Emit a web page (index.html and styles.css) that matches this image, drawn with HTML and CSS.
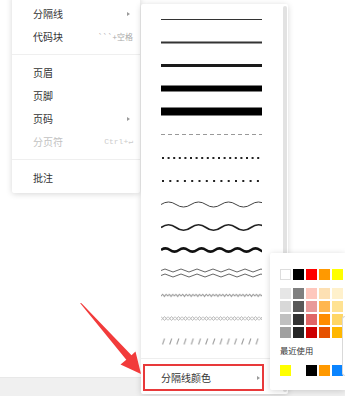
FILE: index.html
```html
<!DOCTYPE html>
<html lang="zh">
<head>
<meta charset="utf-8">
<link rel="stylesheet" href="styles.css">
</head>
<body>
<div class="page">
  <div class="workspace"></div>
  <div class="statusbar"></div>
</div>

<div class="menu main-menu">
  <div class="item"><span>分隔线</span><i class="caret"></i></div>
  <div class="item"><span>代码块</span><span class="kbd">```+空格</span></div>
  <div class="sep"></div>
  <div class="item"><span>页眉</span></div>
  <div class="item"><span>页脚</span></div>
  <div class="item"><span>页码</span><i class="caret"></i></div>
  <div class="item disabled"><span>分页符</span><span class="kbd mono">Ctrl+↵</span></div>
  <div class="sep"></div>
  <div class="item"><span>批注</span></div>
</div>

<div class="menu line-menu">
  <div class="line-list">
    <div class="line-row"><svg viewBox="0 0 101 13"><line x1="0" y1="6.5" x2="101" y2="6.5" stroke="#333" stroke-width="1"/></svg></div>
    <div class="line-row"><svg viewBox="0 0 101 13"><line x1="0" y1="6.5" x2="101" y2="6.5" stroke="#333" stroke-width="2"/></svg></div>
    <div class="line-row"><svg viewBox="0 0 101 13"><line x1="0" y1="6.5" x2="101" y2="6.5" stroke="#1a1a1a" stroke-width="3"/></svg></div>
    <div class="line-row"><svg viewBox="0 0 101 13"><line x1="0" y1="6.5" x2="101" y2="6.5" stroke="#000" stroke-width="6"/></svg></div>
    <div class="line-row"><svg viewBox="0 0 101 13"><line x1="0" y1="6.5" x2="101" y2="6.5" stroke="#000" stroke-width="8"/></svg></div>
    <div class="line-row"><svg viewBox="0 0 101 13"><line x1="0" y1="6.5" x2="101" y2="6.5" stroke="#999" stroke-width="1" stroke-dasharray="4 3"/></svg></div>
    <div class="line-row"><svg viewBox="0 0 101 13"><line x1="1" y1="7" x2="101" y2="7" stroke="#222" stroke-width="2" stroke-dasharray="2 3.6"/></svg></div>
    <div class="line-row"><svg viewBox="0 0 101 13"><line x1="1" y1="7" x2="101" y2="7" stroke="#222" stroke-width="2" stroke-dasharray="2 5.3"/></svg></div>
    <div class="line-row"><svg viewBox="0 0 101 13"><path d="M0,7.5 q7.5,-5 15,0 t15,0 t15,0 t15,0 t15,0 t15,0 t15,0" fill="none" stroke="#444" stroke-width="1"/></svg></div>
    <div class="line-row"><svg viewBox="0 0 101 13"><path d="M0,7.5 q7.5,-5.5 15,0 t15,0 t15,0 t15,0 t15,0 t15,0 t15,0" fill="none" stroke="#222" stroke-width="1.6"/></svg></div>
    <div class="line-row"><svg viewBox="0 0 101 13"><path d="M0,7 q4.5,-3.2 9,0 t9,0 t9,0 t9,0 t9,0 t9,0 t9,0 t9,0 t9,0 t9,0 t9,0 t9,0" fill="none" stroke="#111" stroke-width="2.6"/></svg></div>
    <div class="line-row"><svg viewBox="0 0 101 13"><path d="M0,4.5 q4,-3 8,0 t8,0 t8,0 t8,0 t8,0 t8,0 t8,0 t8,0 t8,0 t8,0 t8,0 t8,0 t8,0" fill="none" stroke="#666" stroke-width="1"/><path d="M0,9.5 q4,-3 8,0 t8,0 t8,0 t8,0 t8,0 t8,0 t8,0 t8,0 t8,0 t8,0 t8,0 t8,0 t8,0" fill="none" stroke="#666" stroke-width="1"/></svg></div>
    <div class="line-row"><svg viewBox="0 0 101 13"><defs><pattern id="zz" width="6.7" height="13" patternUnits="userSpaceOnUse"><path d="M-0.5,7.6 L1.7,5.2 L3.35,7.6 L5,5.2 L7.2,7.6" fill="none" stroke="#9a9a9a" stroke-width="1"/></pattern></defs><rect width="101" height="13" fill="url(#zz)"/></svg></div>
    <div class="line-row"><svg viewBox="0 0 101 13"><defs><pattern id="xx" width="7" height="13" patternUnits="userSpaceOnUse"><path d="M0,4.5 L3.5,8.5 L7,4.5 M0,8.5 L3.5,4.5 L7,8.5" fill="none" stroke="#bbb" stroke-width="1"/></pattern></defs><rect width="101" height="13" fill="url(#xx)"/></svg></div>
    <div class="line-row"><svg viewBox="0 0 101 13"><defs><pattern id="sl" width="7.2" height="13" patternUnits="userSpaceOnUse"><path d="M1.5,9.5 L3.5,3.5" fill="none" stroke="#999" stroke-width="1"/></pattern></defs><rect width="101" height="13" fill="url(#sl)"/></svg></div>
  </div>
  <div class="line-sep"></div>
  <div class="color-item"><span>分隔线颜色</span><i class="caret"></i></div>
  <div class="scrollbar"></div>
</div>

<div class="menu palette">
  <div class="swatches">
    <span class="sw white"></span>
    <span class="sw" style="background:#000000"></span>
    <span class="sw" style="background:#ff0000"></span>
    <span class="sw" style="background:#ff9900"></span>
    <span class="sw" style="background:#ffff00"></span>
  </div>
  <div class="grid">
    <span class="sw" style="background:#e6e6e6"></span>
    <span class="sw" style="background:#7f7f7f"></span>
    <span class="sw" style="background:#fec7bd"></span>
    <span class="sw" style="background:#fde0b3"></span>
    <span class="sw" style="background:#fff1cc"></span>
    <span class="sw" style="background:#d8d8d8"></span>
    <span class="sw" style="background:#595959"></span>
    <span class="sw" style="background:#e89a9a"></span>
    <span class="sw" style="background:#ffb64f"></span>
    <span class="sw" style="background:#ffe292"></span>
    <span class="sw" style="background:#c0c0c0"></span>
    <span class="sw" style="background:#343434"></span>
    <span class="sw" style="background:#e06666"></span>
    <span class="sw" style="background:#ff8c00"></span>
    <span class="sw" style="background:#ffd666"></span>
    <span class="sw" style="background:#a0a0a0"></span>
    <span class="sw" style="background:#262626"></span>
    <span class="sw" style="background:#cc0000"></span>
    <span class="sw" style="background:#e65100"></span>
    <span class="sw" style="background:#ffb700"></span>
  </div>
  <div class="recent-label">最近使用</div>
  <div class="swatches">
    <span class="sw" style="background:#ffff00"></span>
    <span class="sw empty"></span>
    <span class="sw" style="background:#000000"></span>
    <span class="sw" style="background:#ff9900"></span>
    <span class="sw" style="background:#0a84ff"></span>
  </div>
</div>

<div class="edge-box"></div>

<svg class="arrow" viewBox="0 0 345 396" width="345" height="396">
  <path d="M80,303 L81.5,303.2 L131.5,355.2 L135.5,351.5 L141,374 L120.5,364.5 L126.3,359.8 Z" fill="#f23b3b"/>
</svg>
</body>
</html>
```

FILE: styles.css
```css
html, body {
  margin: 0;
  width: 345px;
  height: 396px;
  overflow: hidden;
}

body {
  position: relative;
  background: #fff;
  font-family: "Noto Sans CJK SC", "Noto Sans", sans-serif;
  color: #333;
}

.page {
  display: flex;
  flex-direction: column;
  height: 100%;
}

.workspace {
  flex: 1;
}

.statusbar {
  height: 19px;
  background: #f0f0f0;
  border-top: 1px solid #e8e8e8;
  box-sizing: border-box;
}

.menu {
  position: absolute;
  background: #fff;
  border-radius: 2px;
  box-shadow: 0 1px 6px rgba(0, 0, 0, 0.16);
  box-sizing: border-box;
}

/* main context menu */
.main-menu {
  left: 12px;
  top: -6px;
  width: 128px;
  padding: 8px 0 4px;
}

.item {
  height: 23px;
  display: flex;
  align-items: center;
  justify-content: space-between;
  padding: 0 7px 0 21px;
  font-size: 10px;
  line-height: 1;
  color: #333;
}

.item.disabled {
  color: #c2c2c2;
}

.sep {
  height: 1px;
  background: #efefef;
  margin: 6px 0;
}

.caret {
  width: 0;
  height: 0;
  border-left: 3px solid #9a9a9a;
  border-top: 2.5px solid transparent;
  border-bottom: 2.5px solid transparent;
  margin-right: 3px;
}

.kbd {
  font-size: 8px;
  color: #aaa;
}

.kbd.mono {
  font-family: "Liberation Mono", "DejaVu Sans Mono", monospace;
  color: #ccc;
}

/* line style submenu */
.line-menu {
  left: 141px;
  top: 4px;
  width: 147px;
  height: 390px;
  padding-top: 4px;
  z-index: 2;
}

.line-row {
  height: 23px;
  display: flex;
  align-items: center;
  padding-left: 20px;
}

.line-row svg {
  display: block;
  width: 101px;
  height: 13px;
}

.line-sep {
  height: 1px;
  background: #eee;
  margin-top: 5px;
  margin-right: 6px;
}

.color-item {
  margin: 5px 24px 0 2px;
  height: 27px;
  border: 2px solid #e8393a;
  box-sizing: border-box;
  display: flex;
  align-items: center;
  justify-content: space-between;
  padding: 0 0 0 16px;
  font-size: 10px;
  color: #333;
}

.color-item .caret {
  margin-right: 2px;
}

.scrollbar {
  position: absolute;
  right: 1px;
  top: 2px;
  bottom: 2px;
  width: 4px;
  border-radius: 2px;
  background: #e2e2e2;
}

/* colour palette */
.palette {
  left: 270px;
  top: 253px;
  width: 75px;
  height: 137px;
  padding: 16px 0 0 10px;
  border-radius: 2px 0 0 2px;
  overflow: hidden;
  z-index: 3;
}

.swatches {
  display: flex;
  gap: 2px;
}

.sw {
  display: block;
  flex: none;
  width: 11px;
  height: 11px;
  box-sizing: border-box;
}

.sw.white {
  background: #fff;
  border: 1px solid #ddd;
}

.sw.empty {
  background: #fff;
}

.grid {
  display: grid;
  grid-template-columns: repeat(5, 11px);
  gap: 2px;
  margin-top: 8px;
}

.recent-label {
  margin-top: 5px;
  height: 14px;
  line-height: 14px;
  font-size: 8.3px;
  color: #333;
  margin-bottom: 8px;
}

.edge-box {
  position: absolute;
  left: 342px;
  top: 316px;
  width: 2px;
  height: 58px;
  border: 1px solid #d9d9d9;
  border-right: none;
  border-radius: 3px 0 0 3px;
  background: #fff;
  z-index: 4;
}

.arrow {
  position: absolute;
  left: 0;
  top: 0;
  z-index: 10;
  pointer-events: none;
}
```
